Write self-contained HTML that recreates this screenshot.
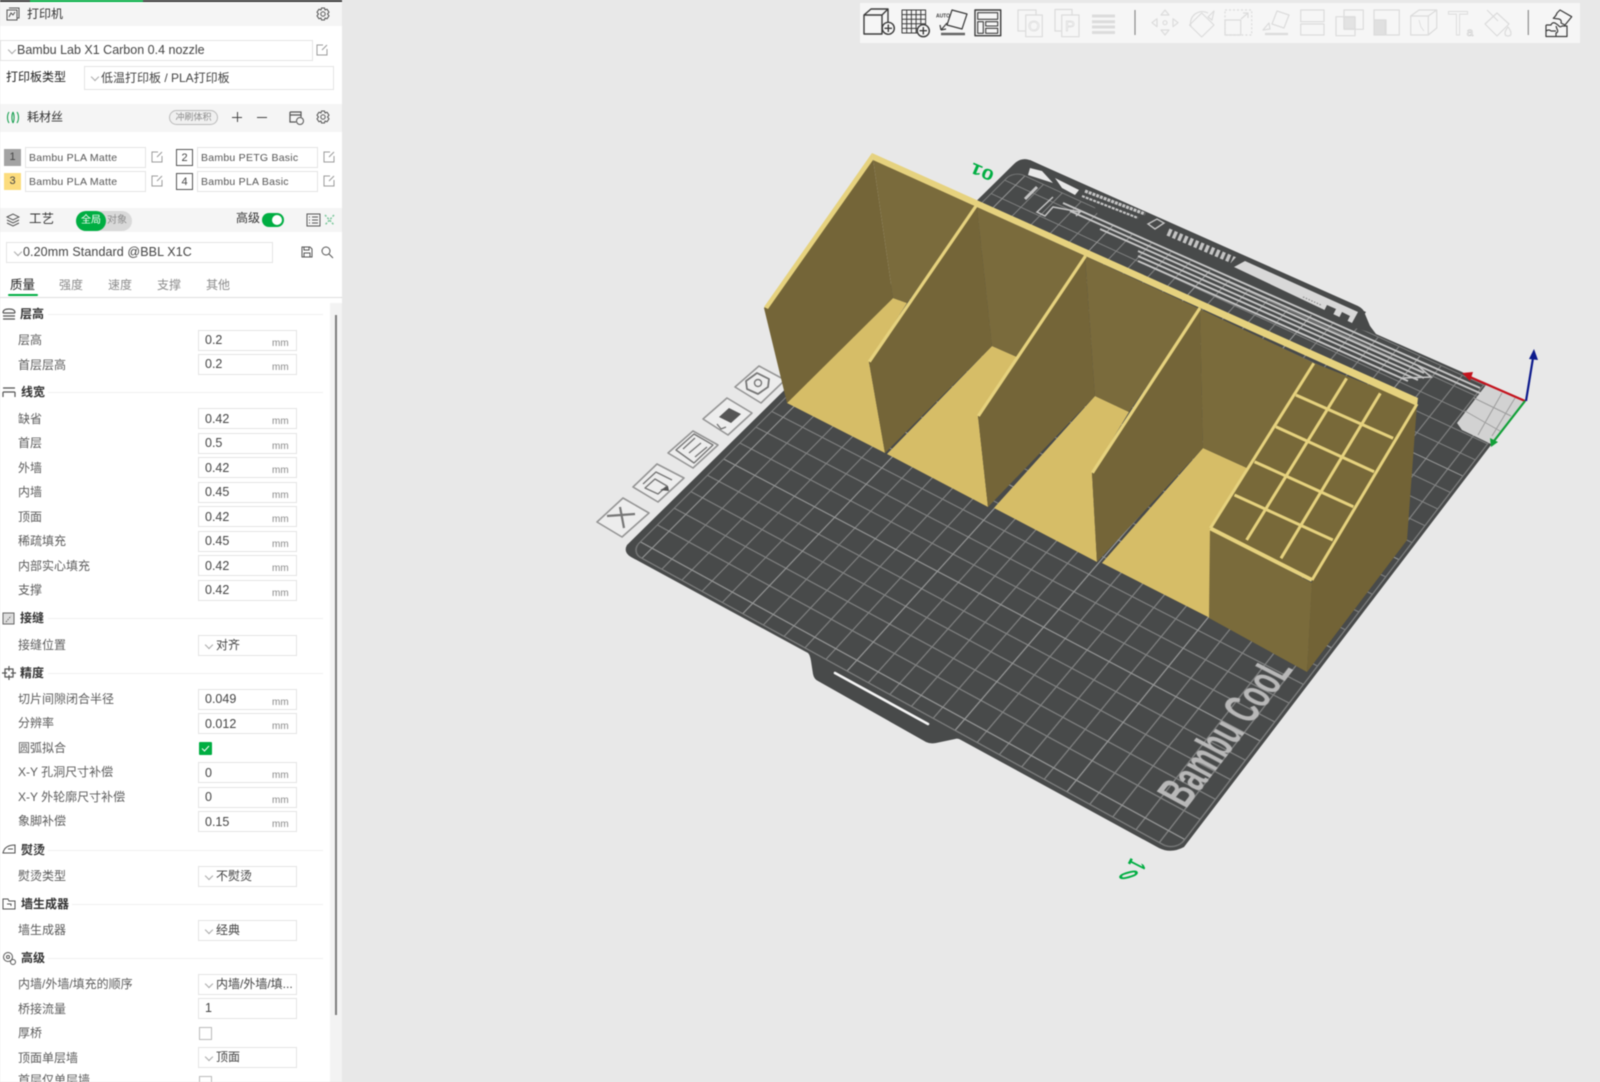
<!DOCTYPE html>
<html lang="zh"><head><meta charset="utf-8"><title>Bambu Studio</title>
<style>
html,body{margin:0;padding:0;width:1600px;height:1082px;overflow:hidden;background:#e8e8e8}
body{position:relative;font-family:"Liberation Sans","Noto Sans CJK SC",sans-serif;color:#333;filter:blur(.4px)}
.layer{position:absolute;left:0;top:0}
#plane{position:absolute;left:0;top:0;width:1000px;height:1000px;transform-origin:0 0;
transform:matrix3d(.52805,-.36314,0,.00013687,.45285,.23124,0,-.00008543,0,0,1,0,623.6,553,0,1)}
#grid{position:absolute;left:8px;top:8px;width:984px;height:984px;border-radius:20px;outline:2px solid #7d7e7e;
background-image:linear-gradient(#959696 2.4px,transparent 2.4px),linear-gradient(90deg,#959696 2.4px,transparent 2.4px),linear-gradient(#808181 2px,transparent 2px),linear-gradient(90deg,#808181 2px,transparent 2px);
background-size:195px 195px,195px 195px,39px 39px,39px 39px;background-position:21px 21px}
#bc{position:absolute;left:72px;top:905px;font:bold 74px/74px "Liberation Sans",sans-serif;color:#b8b8b8;transform-origin:0 0;transform:scaleX(.62);white-space:nowrap}
#panel{position:absolute;left:0;top:0;width:342px;height:1082px;background:#fff;overflow:hidden}
#panel div,#panel svg.i{position:absolute}
.band{left:0;width:342px;background:#f5f5f5}
.t{white-space:nowrap;line-height:16px;height:16px}
.box{border:1px solid #e4e4e4;box-sizing:border-box;background:#fff}
.ch{width:5px;height:5px;border-right:1px solid #aaa;border-bottom:1px solid #aaa;transform:rotate(45deg)}
.l{left:18px;font-size:12px;color:#5c5c5c;white-space:nowrap;line-height:16px}
.h{left:20px;font-size:12px;font-weight:bold;color:#333;white-space:nowrap;line-height:16px}
.r{height:1px;background:#f0f0f0;right:19px}
.v{left:205px;font-size:12.5px;color:#444;line-height:16px;white-space:nowrap}
.m{left:272px;font-size:10px;color:#8a8a8a;line-height:12px;margin-top:2px}
.in{left:198px;width:99px;height:21px}
.tab{top:277px;font-size:12px;color:#8c8c8c;line-height:16px;white-space:nowrap}
.fn{font-size:10.5px;color:#555;line-height:14px;letter-spacing:.25px;white-space:nowrap;margin-top:1px}
.sw{width:17px;height:17px;box-sizing:border-box;font-size:11px;line-height:16px;text-align:center;color:#444}
</style></head><body>

<svg class="layer" width="1600" height="1082" viewBox="0 0 1600 1082">
<!-- side tiles -->
<g fill="#ededed" stroke="#959595" stroke-width="1.6" stroke-linejoin="round">
<path d="M597 522 623 498 649 513 622 537Z"/>
<path d="M633 487 657 464 684 478 658 502Z"/>
<path d="M668 453 693 431 718 445 693 468Z"/>
<path d="M703 419 727 398 752 413 728 435Z"/>
<path d="M735 387 759 366 785 380 761 403Z"/>
</g>
<g fill="none" stroke="#777" stroke-width="1.4" stroke-linejoin="round">
<path d="M607 516 635 514M620 507 624 528" stroke-width="2.2"/>
<path d="M643 484 656 472 672 480M645 488 655 479 667 486 658 494Z"/>
<path d="M676 450 694 434 713 445 694 463ZM683 449 695 438M689 453 701 443M695 457 707 447"/>
<path d="M717 424 721 429 726 427"/>
<path d="M746 381 757 373 769 379 768 387 758 394 747 389Z" stroke-width="1.8"/>
<circle cx="758" cy="383" r="3.5"/>
</g>
<path d="M719 417 729 408 741 414 731 423Z" fill="#555"/>
<path d="M660 490 668 486 669 491Z" fill="#555"/>

<!-- plate -->
<path fill="#484a4a" d="M631 557 808 653Q810 655 811 661L813 674Q814 679 818 681L926 742Q930 744 936 743L955 739Q958 738 961 740L1159 848Q1171 854 1184 847L1491 445 1526 401 1482 383 1462 372 1376 334Q1372 332 1370 326L1365 314Q1364 309 1358 306L1032 161Q1022 156 1014 164L627 545Q623 552 631 557Z"/>
</svg>

<div id="plane"><div id="grid"></div><div id="bc">Bambu CooL</div></div>

<svg class="layer" width="1600" height="1082" viewBox="0 0 1600 1082">
<!-- covered top band -->
<path fill="#484a4a" d="M1092 200 1370 326 1376 334 1300 312 1100 220Z"/>
<path fill="#484a4a" d="M1030 160 1090 188 1085 196 1016 166Z"/>
<!-- tab slot -->
<path d="M835 673 928 724" stroke="#f4f4f4" stroke-width="2.6" stroke-linecap="round" fill="none"/>
<path fill="#484a4a" d="M812 662 960 740 930 742 815 678Z" opacity="0"/>
<!-- notches -->
<path fill="#e8e8e8" d="M1030 168 1042 171 1053 183 1028 175Z"/>
<path fill="#e8e8e8" d="M1055 178 1079 190 1075 195 1062 188Z"/>
<!-- printed details -->
<g fill="none" stroke="#c4c4c4">
<path d="M1037 187 1025 199" stroke-width="3"/>
<path d="M1053 197 1037 212 1045 216 1053 207 1080 212 1076 216" stroke-width="1.5"/>
<path d="M1085 191 1145 214" stroke-width="3.2" stroke-dasharray="3 1"/>
<path d="M1082 196 1138 218" stroke-width="2.2" stroke-dasharray="3 1"/>
<path d="M1148 224 1157 219 1164 223 1155 229Z" stroke-width="1.4"/>
<path d="M1168 232 1240 263" stroke-width="7.5" stroke-dasharray="3.4 2.4"/>
<path d="M1063 203 1480 388" stroke-width="1.9"/>
<path d="M1070 211 1482 394" stroke-width="1.9"/>
<path d="M1100 229 1424 373" stroke-width="1.9"/>
<path d="M1138 251 1424 378" stroke-width="1.9"/>
<path d="M1138 256 1418 380" stroke-width="1.9"/>
<path d="M1138 261 1408 381" stroke-width="1.9"/>
<path d="M1403 378 1431 377 1417 365" stroke-width="1.6"/>
</g>
<path fill="#484a4a" d="M1238 255 1366 312 1358 324 1228 266Z"/>
<path fill="#d8d8d8" d="M1234 267 1245 261 1358 312 1352 323Z"/>
<path fill="none" stroke="#8a8a8a" stroke-width="1.2" stroke-dasharray="1.5 1.5" d="M1303 297 1321 305"/>
<path fill="#484a4a" d="M1327 305 1336 309 1333 315 1324 311Z"/>
<path fill="#484a4a" d="M1342 312 1350 316 1347 322 1339 318Z"/>
<!-- build corner -->
<path fill="#d2d2d2" d="M1486 385 1525 401 1491 444 1462 430 1457 423Z"/>
<g stroke="#9d9d9d" stroke-width="1" fill="none"><path d="M1474 398 1511 416M1465 411 1500 431M1502 393 1478 435M1515 398 1492 436"/></g>

<!-- object -->
<g stroke-linejoin="round">
<path fill="#d6bd67" d="M787 403 893 298 907 303 869 362 885 453Z"/>
<path fill="#d6bd67" d="M887 454 992 346 1017 357 978 416 988 507Z"/>
<path fill="#d6bd67" d="M994 508 1095 396 1129 412 1092 473 1097 562Z"/>
<path fill="#d6bd67" d="M1102 563 1203 448 1247 468 1210 528 1210 618Z"/>
<path fill="#746538" d="M764 308 873 159 893 298 787 403Z"/>
<path fill="#7a6b3c" d="M873 159 977 207 907 303 893 298Z"/>
<path fill="#746538" d="M869 362 977 207 992 346 885 453Z"/>
<path fill="#7a6b3c" d="M977 207 1085 256 1017 357 992 346Z"/>
<path fill="#746538" d="M978 416 1085 258 1095 396 988 507Z"/>
<path fill="#7a6b3c" d="M1085 256 1200 309 1129 412 1095 396Z"/>
<path fill="#746538" d="M1092 473 1200 309 1203 448 1097 562Z"/>
<path fill="#7a6b3b" d="M1200 309 1314 363 1247 468 1203 448Z"/>
<!-- box -->
<path fill="#7a6b3b" d="M1210 528 1312 583 1307 672 1209 618Z"/>
<path fill="#786939" d="M1210 528 1312 580 1417 404 1314 363Z"/>
<path fill="#726336" d="M1312 580 1417 404 1407 540 1307 672Z"/>
</g>
<g fill="none" stroke="#e6d27e" stroke-width="3">
<path d="M1234.5 495 1332.8 540M1254.5 461.7 1353.4 506.7M1275.9 426.7 1374.1 471.7M1295.9 395 1393.1 438.3"/>
<path d="M1246.6 540 1346.6 378.3M1281 558.3 1380.3 393.3"/>
<path d="M1210.3 528.3 1313.8 363.3"/>
<path d="M1210.3 528.3 1312 580" stroke-width="4"/>
<path d="M1312 580 1417 404" stroke-width="3"/>
<path d="M976.7 205 869.3 361.7" stroke-width="3.2"/>
<path d="M1085.5 256 978.3 416" stroke-width="3.2"/>
<path d="M1200 308 1092.4 472.7" stroke-width="3.2"/>
</g>
<path fill="#e6d27e" d="M872 153 1418 398 1417 406 873 160Z"/>
<path fill="#e6d27e" d="M872 153 873 160 768 309 764 307Z"/>

<!-- axes -->
<g fill="none" stroke-width="2.2">
<path d="M1525 401 1470 377" stroke="#c4141e"/>
<path d="M1525 401 1494 441" stroke="#12a038"/>
<path d="M1526 401 1533 358" stroke="#0c1a8c"/>
</g>
<path fill="#c4141e" d="M1462 373 1473 372 1470 381Z"/>
<path fill="#12a038" d="M1491 447 1490 438 1498 442Z"/>
<path fill="#0c1a8c" d="M1534 349 1538 360 1529 359Z"/>

<!-- labels -->
<g fill="#00ae42" font-family="Liberation Sans,sans-serif" font-weight="bold" text-anchor="middle" dominant-baseline="central">
<text transform="translate(982,172) rotate(203) scale(1.2,.85)" font-size="18">01</text>
<text transform="translate(1128,875) rotate(74) scale(.42,.85)" font-size="32">0</text>
<text transform="translate(1136,864) rotate(117) scale(.42,.85)" font-size="30">1</text>
</g>

<!-- toolbar -->
<rect x="860" y="3" width="720" height="40" fill="#f6f6f6"/>
<g fill="none" stroke="#3c3c3c" stroke-width="1.4" stroke-linejoin="round">
<path d="M864 15H882V34H864ZM864 15 871 9H888V28M882 15 888 9"/>
<circle cx="888.3" cy="28.3" r="6" fill="#f6f6f6"/><path d="M884.5 28.3H892M888.3 24.5V32"/>
<path d="M902 10H925.6V33H902ZM906.7 10V33M911.4 10V33M916.1 10V33M920.8 10V33M902 14.6H925.6M902 19.2H925.6M902 23.8H925.6M902 28.4H925.6" stroke-width="1"/>
<circle cx="923.3" cy="30.7" r="6" fill="#f6f6f6"/><path d="M919.5 30.7H927M923.3 27V34.5"/>
<path d="M952 10 967 14 962 29 947 25Z" stroke-width="1.2"/>
<path d="M941 34H965" stroke-width="2.4" stroke="#666"/>
<path d="M947 23 941 30M941 30 940 25M941 30 946 29" stroke-width="1.2"/>
<path d="M975 10H1000.7V35.7H975Z"/>
<path d="M977.7 12.7H997.7V19.3H977.7ZM977.7 21.7H983.3V33.3H977.7ZM985.7 21.7H997.7V26H985.7ZM985.7 28.3H997.7V33.3H985.7Z" stroke-width="1.1"/>
<path d="M1546 25H1551Q1552 22 1555 23L1558 25M1546 25V36.500H1567V26H1562Q1560 28 1558 25M1556 36.500V33Q1559 32 1557 29L1556 26M1546 31Q1549 29 1551 31H1556" stroke-width="1.2"/>
<path d="M1560 10 1571.700 16.700 1565 25 1561 23Q1562 20 1559 19L1553.300 18.300Q1556 16 1557 13Z" stroke-width="1.2"/>
<path d="M1135 10V35M1528.3 10V35" stroke="#8c8c8c" stroke-width="1.2"/>
</g>
<text x="943" y="17.5" font-size="5" font-weight="bold" fill="#444" text-anchor="middle" font-family="Liberation Sans,sans-serif">AUTO</text>
<g fill="none" stroke="#dcdcdc" stroke-width="1.2" stroke-linejoin="round">
<path d="M1025.7 15H1042.3V36.7H1025.7ZM1025.7 31H1018V10H1036V15"/>
<path d="M1061.7 15H1079V36.7H1061.7ZM1061.7 31H1055V9.5H1072V15"/>
<path d="M1092 16H1115M1092 21.7H1115M1092 27H1115M1092 32.5H1115" stroke-width="3"/>
<path d="M1165 10 1169 15H1161ZM1165 35 1169 30H1161ZM1152 22.7 1157 18.7V26.7ZM1178 22.7 1173 18.7V26.7Z"/>
<circle cx="1165" cy="22.7" r="2"/>
<path d="M1201.7 13 1214 25 1201.7 37 1189.5 25Z"/>
<path d="M1191 27C1188 17 1198 8 1208 13"/>
<path d="M1208 17 1214 11 1212 20Z"/>
<path d="M1225 10H1251.7V35H1225Z" stroke-dasharray="2 2"/>
<path d="M1225 20H1240.7V35H1225ZM1241 19 1248 13M1243 13H1248V18"/>
<path d="M1277 11 1289 15 1284 28 1272 24Z"/>
<path d="M1265 34H1288" stroke-width="2.2"/>
<path d="M1269 23 1263 30 1270 29Z"/>
<path d="M1300.7 10H1324V21.7H1300.7ZM1300.7 24H1324V35H1300.7Z"/>
<path d="M1344 10H1363.3V29.3H1344ZM1336 16.7H1355V35.7H1336Z"/>
<path d="M1344 17H1355V29H1344Z" fill="#e3e3e3"/>
<path d="M1374 10H1399.3V35H1386V20H1374Z"/>
<path d="M1374 20H1385V35H1374Z" fill="#e0e0e0"/>
<path d="M1410.7 16H1428.3V35H1410.7ZM1410.7 16 1419 10H1436.7V28L1428.3 35M1428.3 16 1436.7 10"/>
<path d="M1419 20 1421 27 1424 31" stroke-width=".8"/>
<path d="M1487 10 1498 21M1485 24 1497 13 1509 24 1497 36Z"/>
<path d="M1508 27C1504 32 1504 36 1508 36C1512 36 1512 32 1508 27Z"/>
</g>
<g font-family="Liberation Sans,sans-serif" fill="#dcdcdc">
<text x="1034" y="31" font-size="15" text-anchor="middle" fill="none" stroke="#dcdcdc" stroke-width=".7">O</text>
<text x="1070" y="31" font-size="15" text-anchor="middle" fill="none" stroke="#dcdcdc" stroke-width=".7">P</text>
<text x="1458" y="35" font-size="34" text-anchor="middle" fill="none" stroke="#dcdcdc" stroke-width=".9">T</text>
<text x="1470" y="36" font-size="12" text-anchor="middle" fill="none" stroke="#d0d0d0" stroke-width=".6">a</text>
</g>
</svg>

<svg width="0" height="0" style="position:absolute"><defs>
<symbol id="edit" viewBox="0 0 14 14"><path d="M8 2H2V12H12V6M7 7 12 2" fill="none" stroke="#9b9b9b" stroke-width="1"/></symbol>
<symbol id="gear" viewBox="0 0 14 14"><path d="M5.500 1H8.500L9 3 11 2.200 13 5.200 11.500 7 13 8.800 11 11.800 9 11 8.500 13H5.500L5 11 3 11.800 1 8.800 2.500 7 1 5.200 3 2.200 5 3Z" fill="none" stroke="#555" stroke-width="1" stroke-linejoin="round"/><circle cx="7" cy="7" r="2.200" fill="none" stroke="#555" stroke-width="1"/></symbol>
</defs></svg>

<div id="panel">
<div style="left:0;top:0;width:342px;height:2px;background:#3a3a3a"></div>
<div style="left:30px;top:0;width:113px;height:2px;background:#00ae42"></div>

<div class="band" style="top:3px;height:23px"></div>
<svg class="i" style="left:6px;top:7px" width="14" height="14" viewBox="0 0 14 14"><path d="M3 1H13V11H11M1 3H11V13H1ZM3 10 5 6 7 8 9 5" fill="none" stroke="#555" stroke-width="1"/></svg>
<div class="t" style="left:27px;top:6px;font-size:12px">打印机</div>
<svg class="i" style="left:316px;top:7px" width="14" height="14"><use href="#gear"/></svg>

<div class="box" style="left:0;top:40px;width:313px;height:21px"></div>
<div class="ch" style="left:9px;top:47px"></div>
<div class="t" style="left:17px;top:42px;font-size:12.5px;color:#444">Bambu Lab X1 Carbon 0.4 nozzle</div>
<svg class="i" style="left:315px;top:43px" width="14" height="14"><use href="#edit"/></svg>
<div class="t" style="left:6px;top:69px;font-size:12px;color:#222">打印板类型</div>
<div class="box" style="left:84px;top:66px;width:250px;height:24px"></div>
<div class="ch" style="left:92px;top:74px"></div>
<div class="t" style="left:101px;top:70px;font-size:12px;color:#444">低温打印板 / PLA打印板</div>

<div class="band" style="top:104px;height:28px"></div>
<svg class="i" style="left:6px;top:111px" width="14" height="13" viewBox="0 0 14 13"><path d="M3 1C1 4 1 9 3 12M7 1C5.500 4 5.500 9 7 12M11 1C13 4 13 9 11 12M7 1C8.500 4 8.500 9 7 12" fill="none" stroke="#0a9a46" stroke-width="1"/></svg>
<div class="t" style="left:27px;top:109px;font-size:12px">耗材丝</div>
<div style="left:169px;top:110px;width:49px;height:15px;border:1px solid #bbb;border-radius:8px;box-sizing:border-box;background:#f0f0f0;font-size:9px;line-height:13px;text-align:center;color:#8a8a8a">冲刷体积</div>
<div style="left:232px;top:117px;width:10px;height:1px;background:#444"></div>
<div style="left:237px;top:112px;width:1px;height:10px;background:#444"></div>
<div style="left:257px;top:117px;width:10px;height:1px;background:#444"></div>
<svg class="i" style="left:289px;top:110px" width="15" height="15" viewBox="0 0 15 15"><path d="M1 2H12V7M1 2V12H7M1 5H12" fill="none" stroke="#555" stroke-width="1.2"/><circle cx="11" cy="11" r="3.500" fill="none" stroke="#555"/></svg>
<svg class="i" style="left:316px;top:110px" width="14" height="14"><use href="#gear"/></svg>

<div class="sw" style="left:4px;top:149px;background:#a3a3a3">1</div>
<div class="box" style="left:25px;top:147px;width:121px;height:21px"></div>
<div class="fn" style="left:29px;top:150px">Bambu PLA Matte</div>
<svg class="i" style="left:150px;top:150px" width="14" height="14"><use href="#edit"/></svg>
<div class="sw" style="left:176px;top:149px;background:#fff;border:1px solid #555">2</div>
<div class="box" style="left:197px;top:147px;width:121px;height:21px"></div>
<div class="fn" style="left:201px;top:150px">Bambu PETG Basic</div>
<svg class="i" style="left:322px;top:150px" width="14" height="14"><use href="#edit"/></svg>
<div class="sw" style="left:4px;top:173px;background:#fcdc7d">3</div>
<div class="box" style="left:25px;top:171px;width:121px;height:21px"></div>
<div class="fn" style="left:29px;top:174px">Bambu PLA Matte</div>
<svg class="i" style="left:150px;top:174px" width="14" height="14"><use href="#edit"/></svg>
<div class="sw" style="left:176px;top:173px;background:#fff;border:1px solid #555">4</div>
<div class="box" style="left:197px;top:171px;width:121px;height:21px"></div>
<div class="fn" style="left:201px;top:174px">Bambu PLA Basic</div>
<svg class="i" style="left:322px;top:174px" width="14" height="14"><use href="#edit"/></svg>

<div class="band" style="top:208px;height:24px"></div>
<svg class="i" style="left:6px;top:213px" width="14" height="14" viewBox="0 0 14 14"><path d="M1 4 7 1 13 4 7 7ZM1 7 7 10 13 7M1 10 7 13 13 10" fill="none" stroke="#555" stroke-width="1"/></svg>
<div class="t" style="left:29px;top:211px;font-size:12.5px">工艺</div>
<div style="left:76px;top:211px;width:56px;height:20px;border-radius:10px;background:#d9d9d9"></div>
<div style="left:76px;top:211px;width:30px;height:20px;border-radius:10px;background:#00ae42;font-size:10px;line-height:20px;color:#fff;text-align:center">全局</div>
<div style="left:107px;top:211px;font-size:10px;line-height:20px;color:#8c8c8c">对象</div>
<div class="t" style="left:236px;top:210px;font-size:12px">高级</div>
<div style="left:262px;top:213px;width:22px;height:14px;border-radius:7px;background:#00ae42"></div>
<div style="left:272px;top:215px;width:10px;height:10px;border-radius:50%;background:#fff"></div>
<svg class="i" style="left:306px;top:213px" width="15" height="14" viewBox="0 0 15 14"><path d="M1 1H14V13H1ZM3 4H4M6 4H12M3 7H4M6 7H12M3 10H4M6 10H12" fill="none" stroke="#555" stroke-width="1"/></svg>
<svg class="i" style="left:323px;top:213px" width="13" height="14" viewBox="0 0 13 14"><path d="M2 2 11 12M11 2 2 12" fill="none" stroke="#79c79a" stroke-width="1.5" stroke-dasharray="2 1.500"/></svg>

<div class="box" style="left:6px;top:242px;width:267px;height:21px"></div>
<div class="ch" style="left:15px;top:249px"></div>
<div class="t" style="left:23px;top:244px;font-size:12.5px;color:#444;letter-spacing:.1px">0.20mm Standard @BBL X1C</div>
<svg class="i" style="left:301px;top:246px" width="12" height="12" viewBox="0 0 12 12"><path d="M1 1H9L11 3V11H1ZM3 1V4H8V1M3 11V7H9V11" fill="none" stroke="#555" stroke-width="1"/></svg>
<svg class="i" style="left:321px;top:246px" width="13" height="13" viewBox="0 0 13 13"><circle cx="5" cy="5" r="4" fill="none" stroke="#555"/><path d="M8 8 12 12" stroke="#555"/></svg>

<div class="tab" style="left:10px;color:#222;font-size:12.5px">质量</div>
<div class="tab" style="left:59px">强度</div>
<div class="tab" style="left:108px">速度</div>
<div class="tab" style="left:157px">支撑</div>
<div class="tab" style="left:206px">其他</div>
<div style="left:8px;top:294px;width:30px;height:2px;background:#00ae42;border-radius:1px"></div>
<div style="left:0;top:297px;width:342px;height:1px;background:#dedede"></div>

<div style="left:330px;top:303px;width:12px;height:779px;background:#f3f3f3"></div>
<div style="left:335px;top:315px;width:1.5px;height:700px;background:#7c7c7c"></div>

<!-- 层高 -->
<svg class="i" style="left:2px;top:308px" width="14" height="12" viewBox="0 0 14 12"><path d="M1 5C1 2 3 1 7 1S13 2 13 5M1 5H13M1 8H13M1 11H13" fill="none" stroke="#555" stroke-width="1.2"/></svg>
<div class="h" style="top:306px">层高</div><div class="r" style="left:48px;top:314px"></div>
<div class="l" style="top:332px">层高</div><div class="box in" style="top:330px"></div><div class="v" style="top:332px">0.2</div><div class="m" style="top:336px">mm</div>
<div class="l" style="top:357px">首层层高</div><div class="box in" style="top:354px"></div><div class="v" style="top:356px">0.2</div><div class="m" style="top:360px">mm</div>

<!-- 线宽 -->
<svg class="i" style="left:2px;top:387px" width="14" height="11" viewBox="0 0 14 11"><path d="M1 1H13M1 5H13M1 5V10M13 5V10" fill="none" stroke="#555" stroke-width="1.2"/></svg>
<div class="h" style="left:21px;top:384px">线宽</div><div class="r" style="left:48px;top:392px"></div>
<div class="l" style="top:411px">缺省</div><div class="box in" style="top:408px"></div><div class="v" style="top:410.500px">0.42</div><div class="m" style="top:414px">mm</div>
<div class="l" style="top:435px">首层</div><div class="box in" style="top:433px"></div><div class="v" style="top:435px">0.5</div><div class="m" style="top:439px">mm</div>
<div class="l" style="top:460px">外墙</div><div class="box in" style="top:457px"></div><div class="v" style="top:459.500px">0.42</div><div class="m" style="top:463px">mm</div>
<div class="l" style="top:484px">内墙</div><div class="box in" style="top:482px"></div><div class="v" style="top:484px">0.45</div><div class="m" style="top:488px">mm</div>
<div class="l" style="top:509px">顶面</div><div class="box in" style="top:506px"></div><div class="v" style="top:508.500px">0.42</div><div class="m" style="top:512px">mm</div>
<div class="l" style="top:533px">稀疏填充</div><div class="box in" style="top:531px"></div><div class="v" style="top:533px">0.45</div><div class="m" style="top:537px">mm</div>
<div class="l" style="top:558px">内部实心填充</div><div class="box in" style="top:555px"></div><div class="v" style="top:557.500px">0.42</div><div class="m" style="top:561px">mm</div>
<div class="l" style="top:582px">支撑</div><div class="box in" style="top:580px"></div><div class="v" style="top:582px">0.42</div><div class="m" style="top:586px">mm</div>

<!-- 接缝 -->
<svg class="i" style="left:2px;top:612px" width="13" height="13" viewBox="0 0 13 13"><path d="M1 1H12V12H1Z" fill="#ddd" stroke="#666"/><path d="M4 10 9 4" stroke="#666" stroke-dasharray="1.500 1"/></svg>
<div class="h" style="top:610px">接缝</div><div class="r" style="left:48px;top:618px"></div>
<div class="l" style="top:637px">接缝位置</div><div class="box in" style="top:635px"></div><div class="ch" style="left:206px;top:642px"></div><div class="v" style="left:216px;top:637px;font-size:12px">对齐</div>

<!-- 精度 -->
<svg class="i" style="left:2px;top:666px" width="14" height="14" viewBox="0 0 14 14"><path d="M3 3H11V11H3ZM7 0V14M0 7H14" fill="none" stroke="#555" stroke-width="1.2"/><path d="M5 5H9V9H5Z" fill="#fff"/></svg>
<div class="h" style="top:665px">精度</div><div class="r" style="left:48px;top:673px"></div>
<div class="l" style="top:691px">切片间隙闭合半径</div><div class="box in" style="top:689px"></div><div class="v" style="top:691px">0.049</div><div class="m" style="top:695px">mm</div>
<div class="l" style="top:715px">分辨率</div><div class="box in" style="top:713px"></div><div class="v" style="top:715.500px">0.012</div><div class="m" style="top:719px">mm</div>
<div class="l" style="top:740px">圆弧拟合</div>
<div style="left:199px;top:742px;width:13px;height:13px;background:#00ae42;border-radius:1px"></div>
<svg class="i" style="left:199px;top:742px" width="13" height="13" viewBox="0 0 13 13"><path d="M3 6.500 5.500 9 10 4" fill="none" stroke="#fff" stroke-width="1"/></svg>
<div class="l" style="top:764px">X-Y 孔洞尺寸补偿</div><div class="box in" style="top:762px"></div><div class="v" style="top:764.500px">0</div><div class="m" style="top:768px">mm</div>
<div class="l" style="top:789px">X-Y 外轮廓尺寸补偿</div><div class="box in" style="top:787px"></div><div class="v" style="top:789px">0</div><div class="m" style="top:793px">mm</div>
<div class="l" style="top:813px">象脚补偿</div><div class="box in" style="top:811px"></div><div class="v" style="top:813.500px">0.15</div><div class="m" style="top:817px">mm</div>

<!-- 熨烫 -->
<svg class="i" style="left:2px;top:843px" width="14" height="12" viewBox="0 0 14 12"><path d="M1 10C2 5 6 2 13 2V10ZM6 6H11" fill="none" stroke="#555" stroke-width="1.1"/></svg>
<div class="h" style="left:21px;top:842px">熨烫</div><div class="r" style="left:48px;top:850px"></div>
<div class="l" style="top:868px">熨烫类型</div><div class="box in" style="top:866px"></div><div class="ch" style="left:206px;top:873px"></div><div class="v" style="left:216px;top:868px;font-size:12px">不熨烫</div>

<!-- 墙生成器 -->
<svg class="i" style="left:2px;top:898px" width="14" height="12" viewBox="0 0 14 12"><path d="M1 1H6L7 3H13V11H1ZM5 6H9V8" fill="none" stroke="#555" stroke-width="1"/></svg>
<div class="h" style="left:21px;top:896px">墙生成器</div><div class="r" style="left:72px;top:904px"></div>
<div class="l" style="top:922px">墙生成器</div><div class="box in" style="top:920px"></div><div class="ch" style="left:206px;top:927px"></div><div class="v" style="left:216px;top:922px;font-size:12px">经典</div>

<!-- 高级 -->
<svg class="i" style="left:2px;top:951px" width="14" height="14" viewBox="0 0 14 14"><circle cx="6" cy="6" r="4.500" fill="none" stroke="#555"/><circle cx="6" cy="6" r="1.500" fill="none" stroke="#555"/><circle cx="11" cy="11" r="2.500" fill="#fff" stroke="#555"/></svg>
<div class="h" style="left:21px;top:950px">高级</div><div class="r" style="left:48px;top:958px"></div>
<div class="l" style="top:976px">内墙/外墙/填充的顺序</div><div class="box in" style="top:974px"></div><div class="ch" style="left:206px;top:981px"></div><div class="v" style="left:216px;top:976px;font-size:12px">内墙/外墙/填...</div>
<div class="l" style="top:1001px">桥接流量</div><div class="box in" style="top:998px"></div><div class="v" style="top:1000px">1</div>
<div class="l" style="top:1025px">厚桥</div><div class="box" style="left:199px;top:1027px;width:13px;height:13px;border-color:#bbb"></div>
<div class="l" style="top:1050px">顶面单层墙</div><div class="box in" style="top:1047px"></div><div class="ch" style="left:206px;top:1054px"></div><div class="v" style="left:216px;top:1049px;font-size:12px">顶面</div>
<div class="l" style="top:1072px">首层仅单层墙</div><div class="box" style="left:199px;top:1076px;width:13px;height:13px;border-color:#bbb"></div>
</div>
</body></html>
